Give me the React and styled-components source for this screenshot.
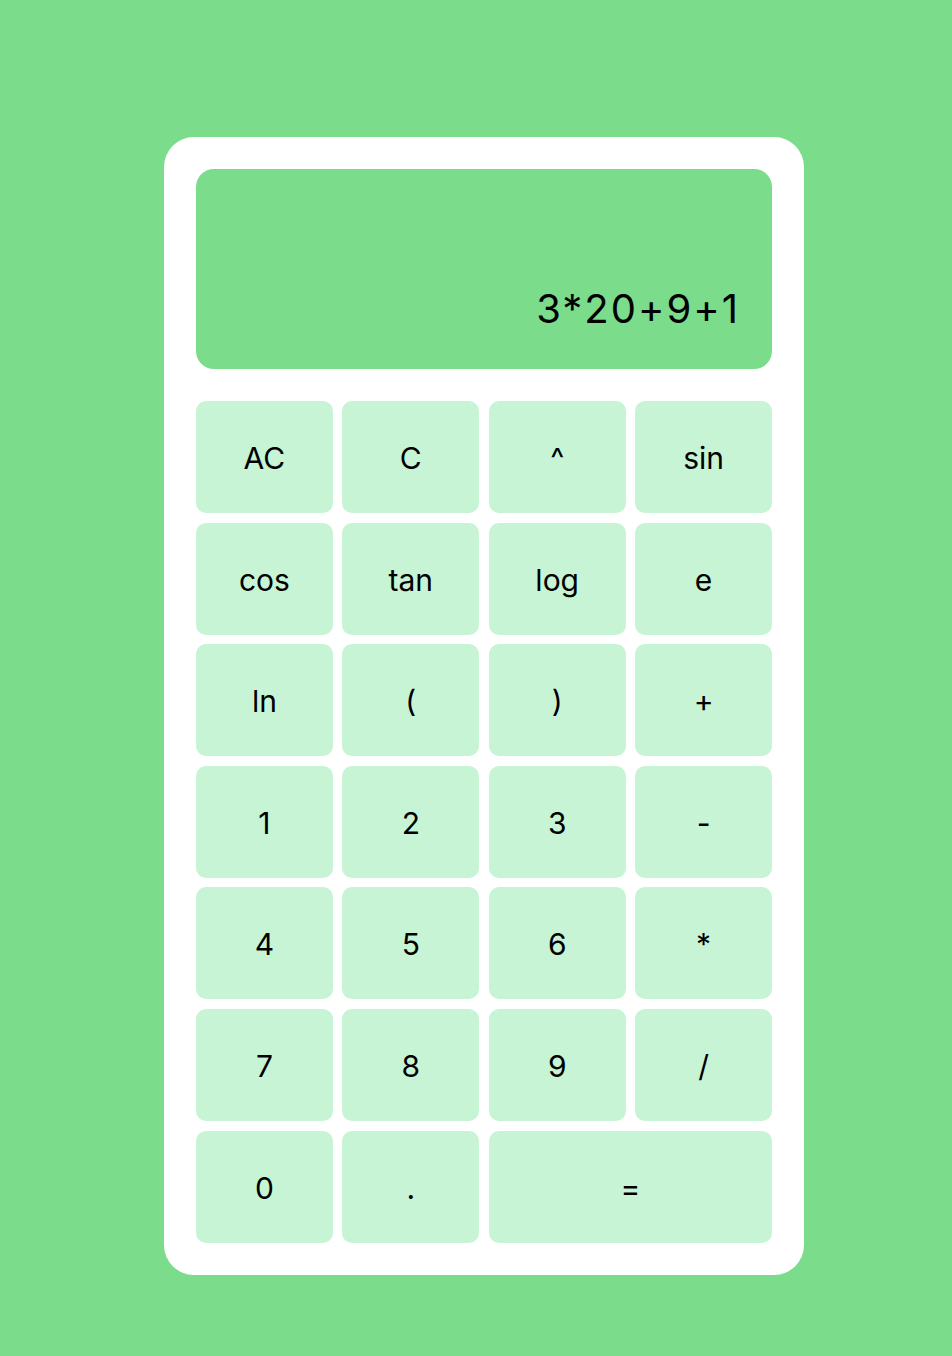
import styled, { createGlobalStyle } from "styled-components"

const GlobalStyle = createGlobalStyle`
	html, body {
		margin: 0;
		background: #7bdc8b;
	}
	body {
		font-family: Inter, "Liberation Sans", sans-serif;
	}
`

const keys = [
	"AC", "C", "^", "sin",
	"cos", "tan", "log", "e",
	"ln", "(", ")", "+",
	"1", "2", "3", "-",
	"4", "5", "6", "*",
	"7", "8", "9", "/",
	"0", ".", "=",
]

export default function App() {
	return (
		<>
			<GlobalStyle />
			<Page>
				<Calculator>
					<Display>3*20+9+1</Display>
					<Keypad>
						{keys.map((k) => (
							<Key
								key={k}
								$wide={k === "="}
							>
								{k}
							</Key>
						))}
					</Keypad>
				</Calculator>
			</Page>
		</>
	)
}

const Page = styled.div`
	min-height: 1356px;
	box-sizing: border-box;
	display: flex;
	justify-content: center;
	align-items: flex-start;
	padding: 137px 0 0 16px;
`

const Calculator = styled.div`
	width: 640px;
	box-sizing: border-box;
	padding: 32px;
	background: #fff;
	border-radius: 30px;
	display: flex;
	flex-direction: column;
	gap: 32px;
`

const Display = styled.div`
	height: 200px;
	box-sizing: border-box;
	background: #7bdc8b;
	border-radius: 18px;
	display: flex;
	align-items: flex-end;
	justify-content: flex-end;
	padding: 0 32px 36px;
	font-size: 40px;
	line-height: 48px;
	letter-spacing: 2px;
	color: #000;
`

const Keypad = styled.div`
	display: grid;
	grid-template-columns: repeat(4, 1fr);
	grid-auto-rows: 112px;
	gap: 9.6px;
`

const Key = styled.button`
	grid-column: ${(p) => (p.$wide ? "span 2" : "auto")};
	border: none;
	border-radius: 10px;
	background: #c6f4d4;
	font-family: inherit;
	font-size: 30px;
	color: #000;
	padding: 2px 0 0;
	cursor: pointer;
`
